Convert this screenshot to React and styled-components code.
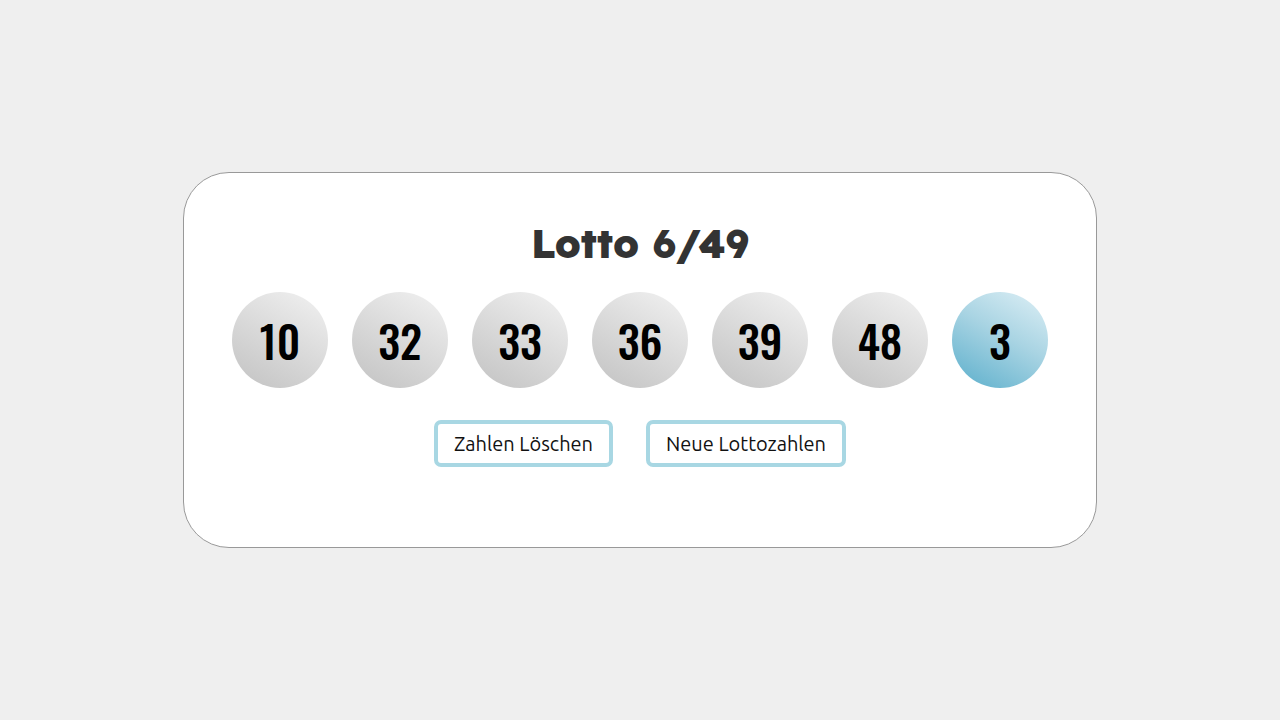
import React from 'react'
import styled, { createGlobalStyle } from 'styled-components'

const GlobalStyle = createGlobalStyle`
  html, body {
    margin: 0;
    height: 100%;
    background: #efefef;
  }
  #root {
    height: 100%;
  }
`

const Page = styled.div`
  height: 720px;
  display: flex;
  align-items: center;
  justify-content: center;
`

const Card = styled.div`
  width: 914px;
  height: 376px;
  box-sizing: border-box;
  background: #fff;
  border: 1px solid #999;
  border-radius: 46px;
  padding-top: 44px;
  display: flex;
  flex-direction: column;
  align-items: center;
`

const Title = styled.h1`
  margin: 0;
  font-family: "Lexend", "Outfit", "Inter", "Noto Sans", sans-serif;
  font-size: 40px;
  font-weight: 800;
  line-height: 52px;
  color: #333;
`

const BallRow = styled.div`
  display: flex;
  gap: 24px;
  margin-top: 23px;
`

const Ball = styled.div`
  width: 96px;
  height: 96px;
  border-radius: 50%;
  display: flex;
  align-items: center;
  justify-content: center;
  background: ${p => p.$bonus
    ? 'linear-gradient(30deg, #5aaecb 0%, #a9d4e3 55%, #dff0f6 100%)'
    : 'linear-gradient(30deg, #c2c2c2 0%, #dcdcdc 55%, #f2f2f2 100%)'};
  font-family: "Oswald", "Bebas Neue", "DejaVu Sans Condensed", sans-serif;
  font-size: 44px;
  font-weight: 500;
  color: #000;
`

const ButtonRow = styled.div`
  display: flex;
  gap: 33px;
  margin-top: 32px;
`

const Button = styled.button`
  height: 47px;
  padding: 0 16px;
  background: #fff;
  border: 4px solid #a8d7e3;
  border-radius: 7px;
  font-family: "Ubuntu", "Noto Sans", sans-serif;
  font-size: 20px;
  color: #111;
  cursor: pointer;
`

const numbers = [10, 32, 33, 36, 39, 48]

export default function App() {
  return (
    <Page>
      <GlobalStyle />
      <Card>
        <Title>Lotto 6/49</Title>
        <BallRow>
          {numbers.map(n => <Ball key={n}>{n}</Ball>)}
          <Ball $bonus>3</Ball>
        </BallRow>
        <ButtonRow>
          <Button>Zahlen Löschen</Button>
          <Button>Neue Lottozahlen</Button>
        </ButtonRow>
      </Card>
    </Page>
  )
}
